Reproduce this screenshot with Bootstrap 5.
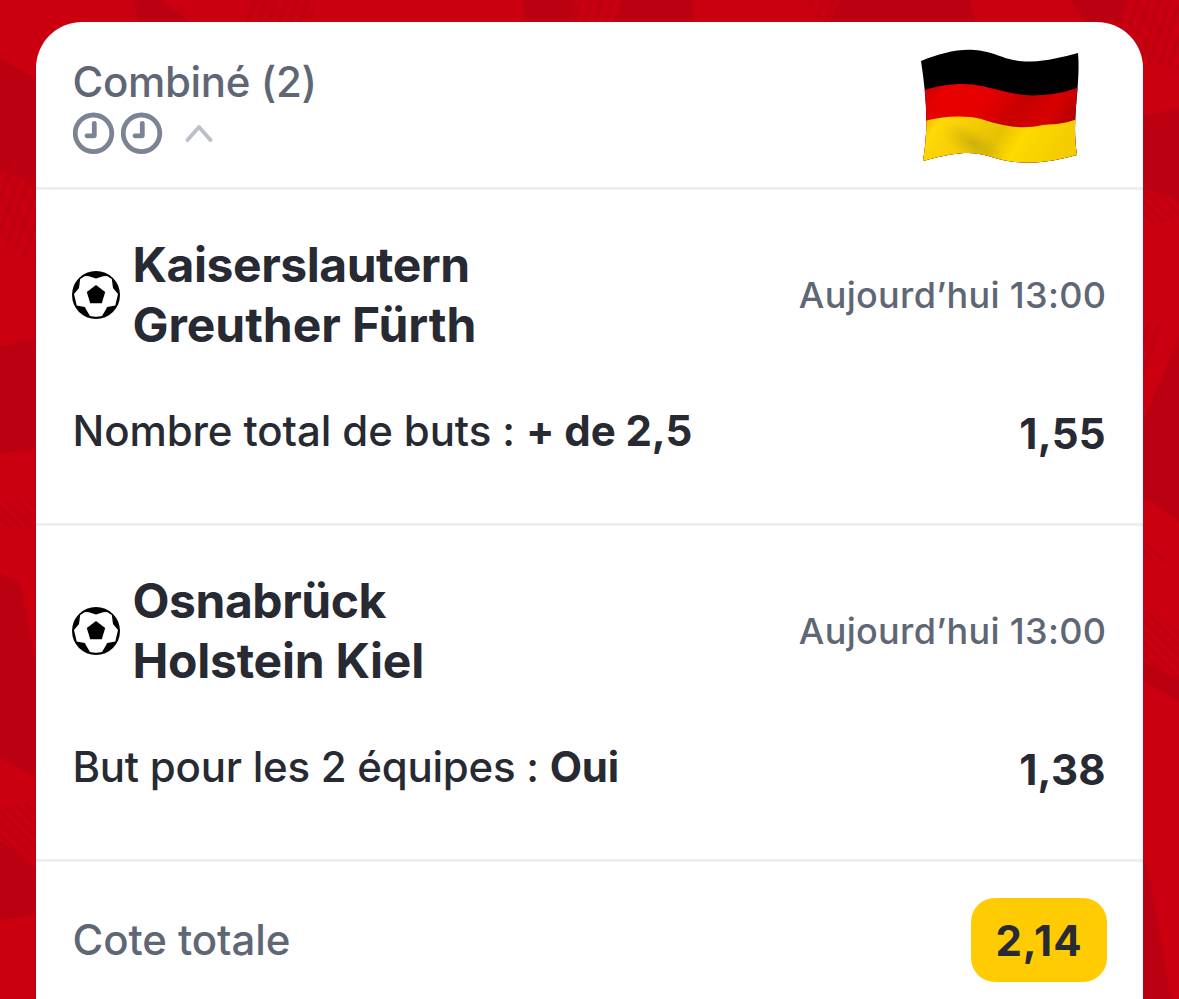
<!DOCTYPE html>
<html lang="fr">
<head>
<meta charset="utf-8">
<meta name="viewport" content="width=device-width, initial-scale=1">
<title>Combiné (2)</title>
<link href="https://cdn.jsdelivr.net/npm/bootstrap@5.3.0/dist/css/bootstrap.min.css" rel="stylesheet">
<style>
body{font-family:Inter,"Liberation Sans",sans-serif;font-weight:450;background:#ca0010;color:#272a32;height:999px}
.backdrop{inset:0;width:1179px;height:999px}
.slip{width:1107px;height:977px;margin:22px 0 0 36px;border:0;border-radius:46px 46px 0 0}
.slip-head{height:165px;padding:30px 64px 0 36.5px}
.bet{height:336px;border-top:3px solid #eeeef0;padding:45px 37px 0 36px}
.total{height:140px;border-top:3px solid #eeeef0;padding:36px 36px 0 36.5px}
.heading{font-size:42px;line-height:60px;color:#5f6675;letter-spacing:-.35px}
.total .heading{line-height:84px;letter-spacing:-.08px}
.status{margin-left:.5px}
.clock-gap{margin-left:6px}
.caret{margin-left:21px}
.teams{font-size:48px;line-height:60px;font-weight:650;margin-left:12.5px;letter-spacing:-.05px}
.fit-tight{letter-spacing:-.45px}
.fit-snug{letter-spacing:-.25px}
.kickoff{font-size:36px;line-height:60px;color:#5f6675;letter-spacing:.32px;margin-right:-.3px}
.pick{font-size:42px;line-height:60px;margin-top:46px;padding-left:.5px;letter-spacing:-.1px}
.pick b,.odds{font-weight:650}
.odds{padding-top:3px;letter-spacing:.3px}
.pill{width:136px;height:84px;border-radius:24px;background:#ffcc03;font-size:42px;font-weight:650;letter-spacing:1px}
.flag{margin-top:-3px}
</style>
</head>
<body class="position-relative overflow-hidden">
<svg class="backdrop position-absolute" viewBox="0 0 1179 999" aria-hidden="true">
<defs>
<pattern id="ra" width="10" height="40" patternUnits="userSpaceOnUse" patternTransform="rotate(18)"><rect width="5" height="40" fill="#bc0011" opacity=".75"/></pattern>
<pattern id="rb" width="8" height="40" patternUnits="userSpaceOnUse" patternTransform="rotate(-45)"><rect width="4" height="40" fill="#bc0011" opacity=".75"/></pattern>
</defs>
<g fill="#bb0011">
<path d="M0 59L36 78V190L24 180L0 170ZM0 346L36 338V449L0 454ZM0 573L20 582L36 660V778L0 758ZM0 840L36 870V914L0 921Z"/>
<path d="M133 0H160L192 22H138ZM523 0H577L570 22H525ZM622 0H692L693 22H612ZM840 0H970L976 22H830ZM1070 0H1128L1120 22H1085ZM1143 116L1179 108V200L1143 188ZM1179 335V500H1143V420L1165 370ZM1149 500H1179V522ZM1143 662L1179 680V702L1143 680ZM1143 855L1150 880L1172 999H1143Z"/>
</g>
<path fill="url(#ra)" d="M0 140L36 170V265L0 240ZM250 0H318L310 22H245ZM577 0H622L612 22H570ZM655 0H693V22H655ZM805 0H840L835 22H820ZM1128 0H1179V70L1143 60L1110 22ZM1143 325L1165 325L1143 400Z"/>
<path fill="url(#rb)" d="M0 500H36V530L0 525ZM0 808L36 800V870L0 845ZM1143 188H1179V220L1143 225ZM1143 540L1168 562L1143 560ZM1143 610L1179 630V680L1143 662Z"/>
</svg>
<svg width="0" height="0" class="position-absolute"><defs>
<g id="clock" fill="none" stroke="#7b8394"><circle cx="20.5" cy="21.3" r="18.3" stroke-width="4.8"/><path d="M21.3 11.3V23.8H14" stroke-width="4.8" stroke-linecap="round" stroke-linejoin="round"/></g>
<g id="ball"><circle cx="24" cy="24" r="24"/><path fill="#fff" d="M13 5L17 5.3L24 7.5L31 5.3L35 5L39.8 8L41 17L46 23L43.3 34.5L35.3 36L30 45Q24 46.5 18 45L12.7 36L4.7 34.5L2 23L7 17L8.2 8Z"/><path d="M24 14L33.2 21L29.8 32.2H18.2L14.8 21Z"/></g>
</defs></svg>
<main class="card slip position-relative">
<header class="slip-head d-flex justify-content-between">
<div><div class="heading">Combiné (2)</div>
<div class="status d-flex align-items-center"><svg width="42" height="42"><use href="#clock"/></svg><svg class="clock-gap" width="42" height="42"><use href="#clock"/></svg><svg class="caret" width="30" height="20" fill="none" stroke="#bdc0ca" stroke-width="4" stroke-linecap="round" stroke-linejoin="round"><path d="M3.5 17L15 4L26.5 17"/></svg></div></div>
<svg class="flag" width="158" height="116" viewBox="0 0 158 116">
<defs><clipPath id="fc"><path d="M0 12C18 5 35 0 53 1C78 3 83 13 110 12.5C126 12 142 8 157 4C160 36 150 70 156 106C133 112 113 116 87 112C63 108 57 96 2 112C8 78 5 45 0 12Z"/></clipPath>
<linearGradient id="fr" x2="1" y2=".35"><stop offset="0" stop-color="#c80003"/><stop offset=".15" stop-color="#e60000"/><stop offset=".42" stop-color="#e60000"/><stop offset=".66" stop-color="#c60000"/><stop offset=".83" stop-color="#d80000"/><stop offset="1" stop-color="#b40000"/></linearGradient>
<linearGradient id="fy" x2="1" y2=".2"><stop offset="0" stop-color="#e0b000"/><stop offset=".13" stop-color="#ffd908"/><stop offset=".35" stop-color="#f4cc05"/><stop offset=".55" stop-color="#e6c204"/><stop offset=".7" stop-color="#ffd900"/><stop offset="1" stop-color="#f4cc00"/></linearGradient>
<radialGradient id="fs"><stop offset="0" stop-color="#b3a20c" stop-opacity=".6"/><stop offset="1" stop-color="#c8aa08" stop-opacity="0"/></radialGradient></defs>
<g clip-path="url(#fc)"><path d="M0 0H158V116H0Z"/><path fill="url(#fr)" d="M0 42C22 35 43 33 61 37C82 42 100 48 121 46C137 45 148 42 158 38V116H0Z"/><path fill="url(#fy)" d="M0 73C22 67 43 66 60 70C82 77 100 81 122 76C137 75 148 74 158 69V116H0Z"/><ellipse cx="53" cy="95" rx="36" ry="15" transform="rotate(28 53 95)" fill="url(#fs)"/></g>
</svg>
</header>
<section class="bet">
<div class="d-flex align-items-center"><svg width="48" height="48"><use href="#ball"/></svg><div class="teams flex-grow-1"><div class="fit-tight">Kaiserslautern</div><div>Greuther Fürth</div></div><div class="kickoff">Aujourd’hui 13:00</div></div>
<div class="pick d-flex justify-content-between"><div>Nombre total de buts : <b>+ de 2,5</b></div><div class="odds">1,55</div></div>
</section>
<section class="bet">
<div class="d-flex align-items-center"><svg width="48" height="48"><use href="#ball"/></svg><div class="teams flex-grow-1"><div class="fit-tight">Osnabrück</div><div class="fit-snug">Holstein Kiel</div></div><div class="kickoff">Aujourd’hui 13:00</div></div>
<div class="pick d-flex justify-content-between"><div class="fit-snug">But pour les 2 équipes : <b>Oui</b></div><div class="odds">1,38</div></div>
</section>
<footer class="total d-flex align-items-start justify-content-between"><span class="heading">Cote totale</span><span class="pill d-flex align-items-center justify-content-center">2,14</span></footer>
</main>
<script src="https://cdn.jsdelivr.net/npm/bootstrap@5.3.0/dist/js/bootstrap.bundle.min.js"></script>
</body>
</html>
